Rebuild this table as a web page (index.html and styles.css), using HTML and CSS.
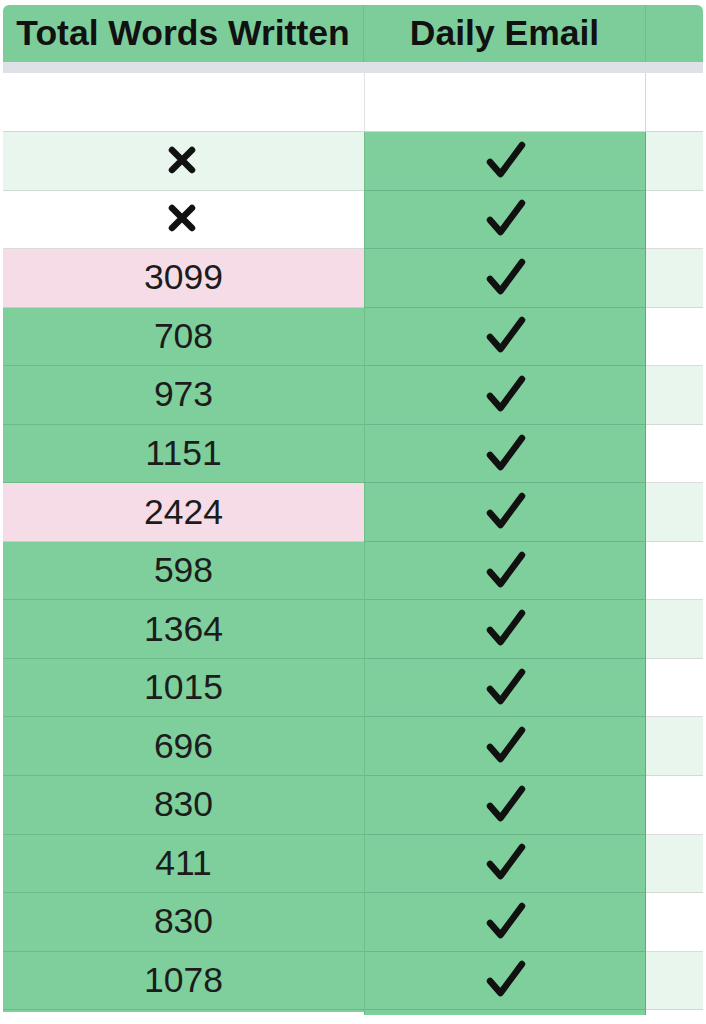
FILE: index.html
```html
<!DOCTYPE html>
<html>
<head>
<meta charset="utf-8">
<link rel="stylesheet" href="styles.css">
</head>
<body>
<div class="sheet">
  <div class="row head">
    <div class="c h1">Total Words Written</div>
    <div class="c h2">Daily Email</div>
    <div class="c h3"></div>
  </div>
  <div class="shade"></div>
  <div class="row blank">
    <div class="c wh"></div>
    <div class="c wh em-blank"></div>
    <div class="c wh"></div>
  </div>
  <div class="row r">
    <div class="c lt"><svg class="x" viewBox="0 0 30 30"><path d="M5 4 L25 24 M25 4 L5 24"/></svg></div>
    <div class="c em"><svg class="ck" viewBox="0 0 40 40"><path d="M4 21 L14.5 33 L36 4"/></svg></div>
    <div class="c lt"></div>
  </div>
  <div class="row r">
    <div class="c wh"><svg class="x" viewBox="0 0 30 30"><path d="M5 4 L25 24 M25 4 L5 24"/></svg></div>
    <div class="c em"><svg class="ck" viewBox="0 0 40 40"><path d="M4 21 L14.5 33 L36 4"/></svg></div>
    <div class="c wh"></div>
  </div>
  <div class="row r">
    <div class="c pk">3099</div>
    <div class="c em"><svg class="ck" viewBox="0 0 40 40"><path d="M4 21 L14.5 33 L36 4"/></svg></div>
    <div class="c lt"></div>
  </div>
  <div class="row r">
    <div class="c gr">708</div>
    <div class="c em"><svg class="ck" viewBox="0 0 40 40"><path d="M4 21 L14.5 33 L36 4"/></svg></div>
    <div class="c wh"></div>
  </div>
  <div class="row r">
    <div class="c gr">973</div>
    <div class="c em"><svg class="ck" viewBox="0 0 40 40"><path d="M4 21 L14.5 33 L36 4"/></svg></div>
    <div class="c lt"></div>
  </div>
  <div class="row r">
    <div class="c gr">1151</div>
    <div class="c em"><svg class="ck" viewBox="0 0 40 40"><path d="M4 21 L14.5 33 L36 4"/></svg></div>
    <div class="c wh"></div>
  </div>
  <div class="row r">
    <div class="c pk">2424</div>
    <div class="c em"><svg class="ck" viewBox="0 0 40 40"><path d="M4 21 L14.5 33 L36 4"/></svg></div>
    <div class="c lt"></div>
  </div>
  <div class="row r">
    <div class="c gr">598</div>
    <div class="c em"><svg class="ck" viewBox="0 0 40 40"><path d="M4 21 L14.5 33 L36 4"/></svg></div>
    <div class="c wh"></div>
  </div>
  <div class="row r">
    <div class="c gr">1364</div>
    <div class="c em"><svg class="ck" viewBox="0 0 40 40"><path d="M4 21 L14.5 33 L36 4"/></svg></div>
    <div class="c lt"></div>
  </div>
  <div class="row r">
    <div class="c gr">1015</div>
    <div class="c em"><svg class="ck" viewBox="0 0 40 40"><path d="M4 21 L14.5 33 L36 4"/></svg></div>
    <div class="c wh"></div>
  </div>
  <div class="row r">
    <div class="c gr">696</div>
    <div class="c em"><svg class="ck" viewBox="0 0 40 40"><path d="M4 21 L14.5 33 L36 4"/></svg></div>
    <div class="c lt"></div>
  </div>
  <div class="row r">
    <div class="c gr">830</div>
    <div class="c em"><svg class="ck" viewBox="0 0 40 40"><path d="M4 21 L14.5 33 L36 4"/></svg></div>
    <div class="c wh"></div>
  </div>
  <div class="row r">
    <div class="c gr">411</div>
    <div class="c em"><svg class="ck" viewBox="0 0 40 40"><path d="M4 21 L14.5 33 L36 4"/></svg></div>
    <div class="c lt"></div>
  </div>
  <div class="row r">
    <div class="c gr">830</div>
    <div class="c em"><svg class="ck" viewBox="0 0 40 40"><path d="M4 21 L14.5 33 L36 4"/></svg></div>
    <div class="c wh"></div>
  </div>
  <div class="row r last">
    <div class="c gr">1078</div>
    <div class="c em"><svg class="ck" viewBox="0 0 40 40"><path d="M4 21 L14.5 33 L36 4"/></svg></div>
    <div class="c lt"></div>
  </div>
  <div class="row tail">
    <div class="c t1"></div>
    <div class="c t2"></div>
    <div class="c t3"></div>
  </div>
</div>
</body>
</html>
```

FILE: styles.css
```css
html, body {
  margin: 0;
  padding: 0;
  background: #ffffff;
}

body {
  font-family: "Liberation Sans", Arial, sans-serif;
  color: #1c1c1c;
}

.sheet {
  margin: 5px 3px 0 3px;
  width: 700px;
}

.row {
  display: grid;
  grid-template-columns: 361px 282px 57px;
}

.c {
  box-sizing: border-box;
  display: flex;
  align-items: center;
  justify-content: center;
  font-size: 35.5px;
  overflow: visible;
}

.head {
  height: 57px;
  background: #7dcd9b;
  border-radius: 6px 6px 0 0;
  font-weight: bold;
  color: #111;
}

.head .h1,
.head .h2 {
  border-right: 1px solid #6fbf8c;
}

.shade {
  height: 11px;
  background: #dfe1e8;
}

.blank {
  height: 59px;
}

.r {
  height: 58.55px;
}

.wh {
  background: #ffffff;
  border-bottom: 1px solid #dcdcdc;
}

.lt {
  background: #e9f6ee;
  border-bottom: 1px solid #d2dad4;
}

.pk {
  background: #f6dce6;
  border-bottom: 1px solid #cfc8cc;
}

.gr {
  background: #7ecf9b;
  border-bottom: 1px solid #6db98a;
}

.em {
  background: #7ecf9b;
  border-bottom: 1px solid #6bb588;
  border-left: 1px solid #70bd8c;
  border-right: 1px solid #5fa97b;
}

.em-blank {
  border-left: 1px solid #e2e2e2;
  border-right: 1px solid #d6d6d6;
}

.blank .c {
  border-bottom: 1px solid #d4d4d4;
}

.tail {
  height: 5px;
}

.t1 {
  background: #7ecf9b;
  height: 2px;
}

.t2 {
  background: #7ecf9b;
  border-left: 1px solid #70bd8c;
  border-right: 1px solid #5fa97b;
  height: 5px;
}

.ck {
  width: 40px;
  height: 40px;
  overflow: visible;
  margin-left: 1px;
}

.ck path {
  fill: none;
  stroke: #111;
  stroke-width: 6.5;
  stroke-linecap: round;
  stroke-linejoin: round;
}

.x {
  width: 30px;
  height: 30px;
  overflow: visible;
  margin-right: 3px;
}

.x path {
  fill: none;
  stroke: #111;
  stroke-width: 6.5;
  stroke-linecap: round;
}
```
